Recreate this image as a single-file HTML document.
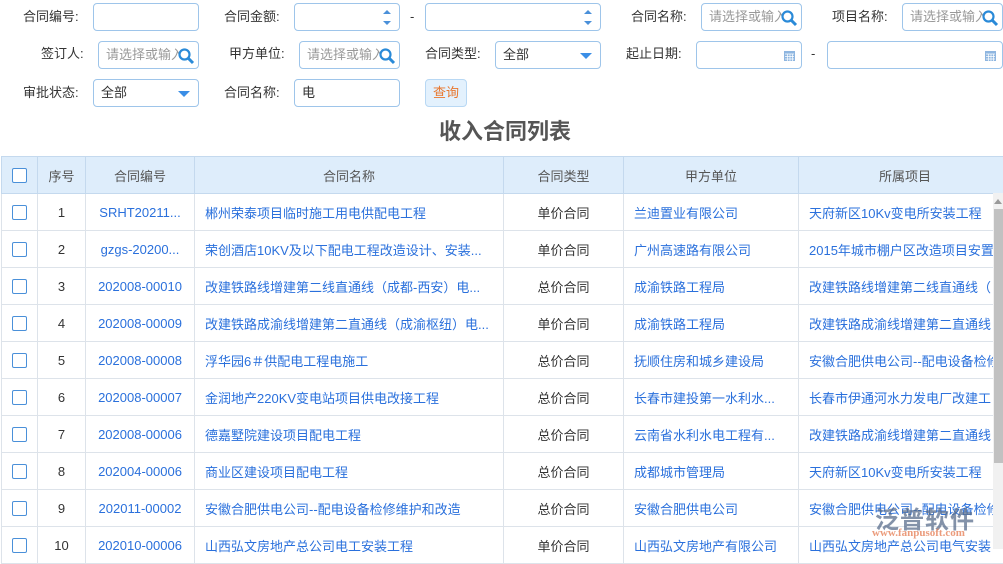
<!DOCTYPE html>
<html><head><meta charset="utf-8"><style>
*{box-sizing:border-box;margin:0;padding:0}
body{width:1003px;height:549px;overflow:hidden;background:#fff;font-family:"Liberation Sans","Noto Sans CJK SC",sans-serif;font-size:13px;color:#333;position:relative}
.a{position:absolute}
.lbl{position:absolute;font-size:13px;color:#333;line-height:16px}
.inp{position:absolute;height:28px;border:1px solid #9ec5ea;border-radius:4px;background:#fff;font-size:13px;line-height:26px;padding-left:7px;color:#333}
.ph{color:#999;white-space:nowrap;overflow:hidden;width:76px}
.q{position:absolute;right:3px;top:5px}
.dd{position:absolute;right:8px;top:11px;width:0;height:0;border-left:6px solid transparent;border-right:6px solid transparent;border-top:6px solid #3a8ee6}
table{position:absolute;left:1px;top:156px;border-collapse:collapse;table-layout:fixed;width:1010px}
td,th{height:37px;border:1px solid #dde3ea;font-weight:normal;text-align:center;white-space:nowrap;overflow:hidden}
th{background:#deedfb;color:#555;border-color:#c4d9ee}
td{color:#333}
.l{text-align:left;padding-left:10px}
.b{color:#2a70dc}
.cb{display:inline-block;width:15px;height:15px;border:1px solid #4a90d9;border-radius:2px;background:#fff;vertical-align:middle}
</style></head><body>
<div class="lbl" style="left:23px;top:9px">合同编号:</div>
<div class="inp" style="left:93px;top:3px;width:106px"></div>
<div class="lbl" style="left:224px;top:9px">合同金额:</div>
<div class="inp" style="left:294px;top:3px;width:106px"><svg class="a" style="right:8px;top:5px" width="8" height="17"><path d="M0 5L4 1 8 5Z M0 12L4 16 8 12Z" fill="#4a90d9"/></svg></div>
<div class="lbl" style="left:410px;top:9px">-</div>
<div class="inp" style="left:425px;top:3px;width:176px"><svg class="a" style="right:8px;top:5px" width="8" height="17"><path d="M0 5L4 1 8 5Z M0 12L4 16 8 12Z" fill="#4a90d9"/></svg></div>
<div class="lbl" style="left:631px;top:9px">合同名称:</div>
<div class="inp ph" style="left:701px;top:3px;width:101px">请选择或输入<svg class="q" width="18" height="18"><circle cx="7.5" cy="7.5" r="5" stroke="#2a8ad8" stroke-width="2.2" fill="none"/><path d="M11 11L16 16" stroke="#2a8ad8" stroke-width="3"/></svg></div>
<div class="lbl" style="left:832px;top:9px">项目名称:</div>
<div class="inp ph" style="left:902px;top:3px;width:101px">请选择或输入<svg class="q" width="18" height="18"><circle cx="7.5" cy="7.5" r="5" stroke="#2a8ad8" stroke-width="2.2" fill="none"/><path d="M11 11L16 16" stroke="#2a8ad8" stroke-width="3"/></svg></div>

<div class="lbl" style="left:41px;top:46px">签订人:</div>
<div class="inp ph" style="left:98px;top:41px;width:101px">请选择或输入<svg class="q" width="18" height="18"><circle cx="7.5" cy="7.5" r="5" stroke="#2a8ad8" stroke-width="2.2" fill="none"/><path d="M11 11L16 16" stroke="#2a8ad8" stroke-width="3"/></svg></div>
<div class="lbl" style="left:229px;top:46px">甲方单位:</div>
<div class="inp ph" style="left:299px;top:41px;width:101px">请选择或输入<svg class="q" width="18" height="18"><circle cx="7.5" cy="7.5" r="5" stroke="#2a8ad8" stroke-width="2.2" fill="none"/><path d="M11 11L16 16" stroke="#2a8ad8" stroke-width="3"/></svg></div>
<div class="lbl" style="left:425px;top:46px">合同类型:</div>
<div class="inp" style="left:495px;top:41px;width:106px">全部<span class="dd"></span></div>
<div class="lbl" style="left:626px;top:46px">起止日期:</div>
<div class="inp" style="left:696px;top:41px;width:106px"><svg class="a" style="right:6px;top:8px" width="11" height="11"><rect x="0" y="1" width="11" height="10" fill="#8fb6e0"/><path d="M1 4H10M1 6.5H10M1 9H10M3.5 4V11M6 4V11M8.5 4V11" stroke="#fff" stroke-width=".7"/></svg></div>
<div class="lbl" style="left:811px;top:46px">-</div>
<div class="inp" style="left:827px;top:41px;width:176px"><svg class="a" style="right:6px;top:8px" width="11" height="11"><rect x="0" y="1" width="11" height="10" fill="#8fb6e0"/><path d="M1 4H10M1 6.5H10M1 9H10M3.5 4V11M6 4V11M8.5 4V11" stroke="#fff" stroke-width=".7"/></svg></div>

<div class="lbl" style="left:23px;top:85px">审批状态:</div>
<div class="inp" style="left:93px;top:79px;width:106px">全部<span class="dd"></span></div>
<div class="lbl" style="left:224px;top:85px">合同名称:</div>
<div class="inp" style="left:294px;top:79px;width:106px">电</div>
<div class="a" style="left:425px;top:79px;width:42px;height:28px;border:1px solid #b8d8f4;border-radius:4px;background:#e3f1fd;color:#e8772e;text-align:center;line-height:26px">查询</div>

<div class="a" style="left:0;width:1010px;top:117px;text-align:center;font-size:22px;font-weight:bold;color:#555;line-height:30px">收入合同列表</div>

<table>
<colgroup><col style="width:36px"><col style="width:48px"><col style="width:109px"><col style="width:309px"><col style="width:120px"><col style="width:175px"><col style="width:213px"></colgroup>
<tr><th><span class="cb"></span></th><th>序号</th><th>合同编号</th><th>合同名称</th><th>合同类型</th><th>甲方单位</th><th>所属项目</th></tr>
<tr><td><span class="cb"></span></td><td>1</td><td class="b">SRHT20211...</td><td class="l b">郴州荣泰项目临时施工用电供配电工程</td><td>单价合同</td><td class="l b">兰迪置业有限公司</td><td class="l b">天府新区10Kv变电所安装工程</td></tr>
<tr><td><span class="cb"></span></td><td>2</td><td class="b">gzgs-20200...</td><td class="l b">荣创酒店10KV及以下配电工程改造设计、安装...</td><td>单价合同</td><td class="l b">广州高速路有限公司</td><td class="l b">2015年城市棚户区改造项目安置</td></tr>
<tr><td><span class="cb"></span></td><td>3</td><td class="b">202008-00010</td><td class="l b">改建铁路线增建第二线直通线（成都-西安）电...</td><td>总价合同</td><td class="l b">成渝铁路工程局</td><td class="l b">改建铁路线增建第二线直通线（</td></tr>
<tr><td><span class="cb"></span></td><td>4</td><td class="b">202008-00009</td><td class="l b">改建铁路成渝线增建第二直通线（成渝枢纽）电...</td><td>单价合同</td><td class="l b">成渝铁路工程局</td><td class="l b">改建铁路成渝线增建第二直通线</td></tr>
<tr><td><span class="cb"></span></td><td>5</td><td class="b">202008-00008</td><td class="l b">浮华园6＃供配电工程电施工</td><td>总价合同</td><td class="l b">抚顺住房和城乡建设局</td><td class="l b">安徽合肥供电公司--配电设备检修</td></tr>
<tr><td><span class="cb"></span></td><td>6</td><td class="b">202008-00007</td><td class="l b">金润地产220KV变电站项目供电改接工程</td><td>总价合同</td><td class="l b">长春市建投第一水利水...</td><td class="l b">长春市伊通河水力发电厂改建工</td></tr>
<tr><td><span class="cb"></span></td><td>7</td><td class="b">202008-00006</td><td class="l b">德嘉墅院建设项目配电工程</td><td>总价合同</td><td class="l b">云南省水利水电工程有...</td><td class="l b">改建铁路成渝线增建第二直通线</td></tr>
<tr><td><span class="cb"></span></td><td>8</td><td class="b">202004-00006</td><td class="l b">商业区建设项目配电工程</td><td>总价合同</td><td class="l b">成都城市管理局</td><td class="l b">天府新区10Kv变电所安装工程</td></tr>
<tr><td><span class="cb"></span></td><td>9</td><td class="b">202011-00002</td><td class="l b">安徽合肥供电公司--配电设备检修维护和改造</td><td>总价合同</td><td class="l b">安徽合肥供电公司</td><td class="l b">安徽合肥供电公司--配电设备检修</td></tr>
<tr><td><span class="cb"></span></td><td>10</td><td class="b">202010-00006</td><td class="l b">山西弘文房地产总公司电工安装工程</td><td>单价合同</td><td class="l b">山西弘文房地产有限公司</td><td class="l b">山西弘文房地产总公司电气安装</td></tr>
</table>
<div class="a" style="left:993px;top:193px;width:10px;height:356px;background:#f1f1f1"></div>
<svg class="a" style="left:994px;top:199px" width="8" height="5"><path d="M0 5L4 0 8 5Z" fill="#999"/></svg>
<div class="a" style="left:994px;top:209px;width:9px;height:254px;background:#c1c1c1"></div>
<div class="a" style="left:875px;top:500px;font-size:24px;font-weight:bold;color:rgba(90,110,140,.75);letter-spacing:1px">泛普软件</div>
<div class="a" style="left:872px;top:527px;font-size:11px;font-weight:bold;color:rgba(230,130,90,.8);font-family:'Liberation Serif',serif">www.fanpusoft.com</div>
</body></html>
